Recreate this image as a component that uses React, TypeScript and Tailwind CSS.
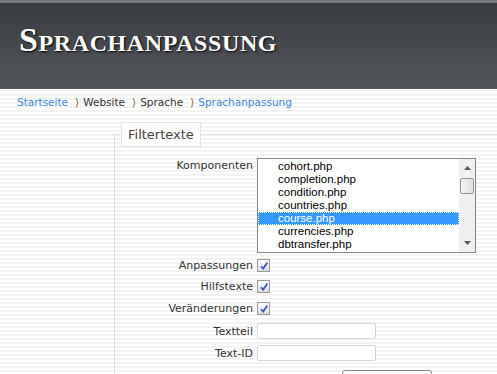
import React from 'react';

const files = [
  'cohort.php',
  'completion.php',
  'condition.php',
  'countries.php',
  'course.php',
  'currencies.php',
  'dbtransfer.php',
];

const font = { fontFamily: '"DejaVu Sans", Verdana, sans-serif' };

function Check() {
  return (
    <span className="flex h-[13px] w-[13px] items-center justify-center border border-[#9a9a9a] bg-gradient-to-b from-[#fdfdfd] to-[#dcdcdc]">
      <svg viewBox="0 0 10 10" className="h-[10px] w-[10px]">
        <path d="M2 5.2 L4.2 7.6 L8.4 1.4" fill="none" stroke="#3b52c4" strokeWidth="1.7" />
      </svg>
    </span>
  );
}

function ListBox() {
  return (
    <div className="flex h-[95px] w-[219px] border border-[#82868e] bg-white">
      <div className="flex-1 overflow-hidden pt-[1px] text-[11.5px] leading-[11px] text-black" style={{ fontFamily: '"Liberation Sans", Arial, sans-serif' }}>
        {files.map((f) => (
          <div
            key={f}
            className={
              f === 'course.php'
                ? 'border border-dotted border-[#ffffff] bg-[#3399ff] pl-[19px] text-white'
                : 'border border-transparent pl-[19px]'
            }
          >
            {f}
          </div>
        ))}
      </div>
      <div className="relative w-[16px] bg-[#f0f0f0]">
        <svg viewBox="0 0 7 4" className="absolute left-[5px] top-[7px] h-[4px] w-[7px]">
          <path d="M0 4 L3.5 0 L7 4 Z" fill="#555" />
        </svg>
        <div className="absolute left-[1px] top-[19px] h-[16px] w-[14px] rounded-[2px] border border-[#979797] bg-gradient-to-r from-[#f4f4f4] to-[#dedede]" />
        <svg viewBox="0 0 7 4" className="absolute bottom-[7px] left-[5px] h-[4px] w-[7px]">
          <path d="M0 0 L3.5 4 L7 0 Z" fill="#555" />
        </svg>
      </div>
    </div>
  );
}

export default function App() {
  return (
    <div className="h-[374px] w-full overflow-hidden bg-[repeating-linear-gradient(to_bottom,#ffffff_0px,#ffffff_2px,#f3f3f3_2px,#f3f3f3_4px)]" style={font}>
      <header className="h-[89px] border-t-[3px] border-[#74777b] bg-gradient-to-b from-[#393c41] to-[#53565b] pl-[19px] pt-[19px]">
        <h1
          className="text-[34px] font-bold leading-[36px] tracking-[0.6px] text-white [font-variant:small-caps] [text-shadow:1px_1px_2px_#000]"
          style={{ fontFamily: '"Liberation Serif", "Times New Roman", serif' }}
        >
          Sprachanpassung
        </h1>
      </header>

      <nav className="flex items-center gap-[7px] pl-[17px] pt-[6px] text-[10.5px] leading-[14px]">
        <span className="text-[#3b87d6]">Startseite</span>
        <span className="text-[#8b5a2b]">⟩</span>
        <span className="-ml-[3px] text-[#333]">Website</span>
        <span className="text-[#8b5a2b]">⟩</span>
        <span className="-ml-[3px] text-[#333]">Sprache</span>
        <span className="text-[#8b5a2b]">⟩</span>
        <span className="-ml-[3px] text-[#3b87d6]">Sprachanpassung</span>
      </nav>

      <fieldset className="ml-[114px] mt-[13px] w-[500px] border-l border-t border-[#dedede] pb-[20px]">
        <legend className="ml-[6px] border border-[#e2e2e2] bg-white px-[6px] text-[13px] leading-[23px] text-[#444]">
          Filtertexte
        </legend>

        <div className="mt-[11px] grid grid-cols-[138px_1fr] items-center gap-x-[4px] text-[11px] leading-[13px] text-[#333]">
          <div className="self-start pt-[1px] text-right">Komponenten</div>
          <ListBox />

          <div className="mt-[6px] text-right">Anpassungen</div>
          <div className="mt-[6px]"><Check /></div>

          <div className="mt-[8px] text-right">Hilfstexte</div>
          <div className="mt-[8px]"><Check /></div>

          <div className="mt-[9px] text-right">Veränderungen</div>
          <div className="mt-[9px]"><Check /></div>

          <div className="mt-[8px] text-right">Textteil</div>
          <input className="mt-[8px] h-[16px] w-[119px] rounded-[2px] border border-[#d4d4d4] bg-white" />

          <div className="mt-[6px] text-right">Text-ID</div>
          <input className="mt-[6px] h-[16px] w-[119px] rounded-[2px] border border-[#d4d4d4] bg-white" />

          <div />
          <div className="ml-[85px] mt-[9px] h-[20px] w-[90px] rounded-t-[3px] border border-[#8a8a8a] bg-gradient-to-b from-white to-[#eeeeee]" />
        </div>
      </fieldset>
    </div>
  );
}
